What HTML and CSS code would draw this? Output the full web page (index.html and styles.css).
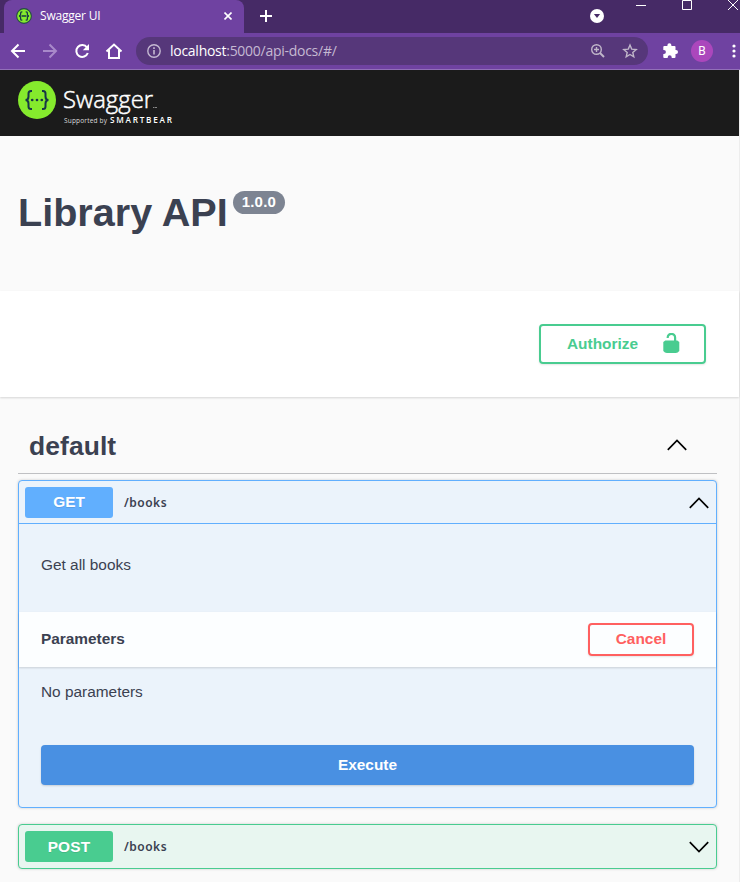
FILE: index.html
```html
<!DOCTYPE html>
<html lang="en">
<head>
<meta charset="utf-8">
<title>Swagger UI</title>
<link rel="stylesheet" href="styles.css">
</head>
<body>
<div class="tabstrip">
  <div class="tab">
    <svg class="favicon" width="16" height="16" viewBox="0 0 38 38"><circle cx="19" cy="19" r="17.5" fill="#85ea2d" stroke="#254b45" stroke-width="2.5"/><g fill="none" stroke="#173647" stroke-width="3"><path d="M15 9h-1q-3 0-3 3v3q0 4-4 4q4 0 4 4v3q0 3 3 3h1M23 9h1q3 0 3 3v3q0 4 4 4q-4 0-4 4v3q0 3-3 3h-1M13 19h12"/></g></svg>
    <span class="tab-title">Swagger UI</span>
    <svg class="tab-close" width="8" height="8" viewBox="0 0 8 8"><path d="M.5.5l7 7M7.500.5l-7 7" stroke="#fff" stroke-width="1.6"/></svg>
  </div>
  <svg class="new-tab" width="12" height="12" viewBox="0 0 12 12"><path d="M6 0v12M0 6h12" stroke="#fff" stroke-width="2"/></svg>
  <svg class="tab-search" width="14" height="14" viewBox="0 0 14 14"><circle cx="7" cy="7" r="7" fill="#fff"/><path d="M3.900 5h6.200L7 9z" fill="#462a66"/></svg>
  <svg class="window-controls" width="105" height="12" viewBox="0 0 105 12" fill="none" stroke="#fff"><path d="M1 5.500h10M47.500.5h9v9h-9zM93 0l10 10M103 0l-10 10"/></svg>
</div>
<div class="toolbar">
  <svg class="nav" width="136" height="36" viewBox="0 0 136 36" fill="none" stroke="#fff" stroke-width="2"><path d="M25 18H12.500M18.500 11.500L12 18l6.500 6.500"/><path d="M43 18h12.500M49.500 11.500L56 18l-6.500 6.500" stroke="#a889ca"/><path d="M87 14.500A5.900 5.900 0 1 0 87.800 20"/><path d="M89 11v6.200h-6.200z" fill="#fff" stroke="none"/><path d="M106.500 18.500L114 11.500l7.500 7M109 17v8h10v-8"/></svg>
  <div class="address">
    <svg width="14" height="14" viewBox="0 0 14 14" fill="none" stroke="#c5b9d2" stroke-width="1.400"><circle cx="7" cy="7" r="6.200"/><path d="M7 6v4.500M7 3.200v1.700" stroke-width="1.600"/></svg>
    <span class="url"><b>localhost</b>:5000/api-docs/#/</span>
    <svg class="address-actions" width="48" height="16" viewBox="0 0 48 16" fill="none" stroke="#c0b6c9" stroke-width="1.400"><circle cx="6.500" cy="6.500" r="4.800"/><path d="M10 10l4 4" stroke-width="2"/><path d="M4 6.500h5M6.500 4v5M40 2l1.700 4.100 4.500.4-3.400 2.900 1 4.400-3.800-2.300-3.800 2.300 1-4.400-3.400-2.900 4.500-.4z"/></svg>
  </div>
  <svg class="extension" width="15" height="15" viewBox="0 0 15 15"><path d="M1.300 3h3.100v-.7a2 2 0 0 1 4 0V3h3.100q1 0 1 1v3h.5a2 2 0 0 1 0 4h-.5v3q0 1-1 1H8.700v-.8a2 2 0 0 0-4 0v.8H1.300q-1 0-1-1v-3h.6a2 2 0 0 0 0-4H.300V4q0-1 1-1z" fill="#fff"/></svg>
  <span class="avatar">B</span>
  <svg class="more" width="4" height="14" viewBox="0 0 4 14" fill="#fff"><circle cx="2" cy="2" r="1.600"/><circle cx="2" cy="7" r="1.600"/><circle cx="2" cy="12" r="1.600"/></svg>
</div>
<div class="page">
  <header class="topbar">
    <svg width="160" height="50" viewBox="0 0 160 50">
      <circle cx="19" cy="19" r="19" fill="#85ea2d"/>
      <g fill="none" stroke="#173647" stroke-width="2"><path d="M14 10h-1q-2.500 0-2.500 2.500v3Q10.500 19 7.500 19q3 0 3 3.500v3q0 2.500 2.500 2.500h1M24 10h1q2.500 0 2.500 2.500v3q0 3.500 3 3.500q-3 0-3 3.500v3q0 2.500-2.500 2.500h-1"/></g>
      <g fill="#173647"><circle cx="14.200" cy="19" r="1.350"/><circle cx="19" cy="19" r="1.350"/><circle cx="23.800" cy="19" r="1.350"/></g>
      <g fill="#fff"><text class="logo-name" x="45" y="27" textLength="90" lengthAdjust="spacingAndGlyphs">Swagger</text><path d="M135 26.500h1.500M137 26.500h2" stroke="#888"/><text class="logo-by" x="46" y="42" textLength="43">Supported by</text><text class="logo-brand" x="92" y="42" textLength="62">SMARTBEAR</text></g>
    </svg>
  </header>
  <section class="info"><h1>Library API</h1><span class="version">1.0.0</span></section>
  <section class="schemes">
    <button class="btn authorize"><span>Authorize</span><svg width="17" height="20" viewBox="0 0 17 20"><path d="M4.700 5V4.500a3.700 3.700 0 0 1 7.400 0V9" fill="none" stroke="#49cc90" stroke-width="2.200"/><path d="M2.300 7.500h12l2 1.500v9q-1.500 2-3.500 2h-9q-2 0-3.500-2V9z" fill="#49cc90"/></svg></button>
  </section>
  <main>
    <div class="tag"><h2>default</h2><svg width="20" height="12" viewBox="0 0 20 12"><path d="M.8 10.800L10 1.500l9.200 9.300"/></svg></div>
    <article class="operation get">
      <div class="summary"><span class="method">GET</span><span class="path">/books</span><svg width="20" height="12" viewBox="0 0 20 12"><path d="M.8 10.800L10 1.500l9.200 9.300"/></svg></div>
      <div class="description">Get all books</div>
      <div class="section-header"><h4>Parameters</h4><button class="btn cancel">Cancel</button></div>
      <div class="parameters">No parameters</div>
      <button class="execute">Execute</button>
    </article>
    <article class="operation post">
      <div class="summary"><span class="method">POST</span><span class="path">/books</span><svg width="20" height="12" viewBox="0 0 20 12"><path d="M.8 1.200L10 10.500l9.200-9.300"/></svg></div>
    </article>
  </main>
</div>
</body>
</html>
```
FILE: styles.css
```css
* { box-sizing: border-box; }
body { margin: 0; height: 882px; overflow: hidden; background: #fafafa; color: #3b4151; font-family: "Liberation Sans", sans-serif; font-size: 15.4px; }
svg { display: block; flex: none; }
h1, h2, h4 { margin: 0; }
button { font: bold 15.4px "Liberation Sans", sans-serif; }
.tabstrip { display: flex; height: 33px; padding-left: 4px; background: #462a66; }
.tab { display: flex; align-items: center; width: 240px; padding: 0 12px; border-radius: 8px 8px 0 0; background: #6f42a1; color: #fff; font: 12px/32px "Open Sans", sans-serif; }
.tab-title { margin: -1px 0 0 8px; letter-spacing: -.2px; }
.tab-close { margin: -1px 0 0 auto; }
.favicon { margin-top: -1px; }
.new-tab { margin: 10px 0 0 16px; }
.tab-search { margin: 9px 0 0 318px; }
.window-controls { margin-left: 31px; }
.toolbar { display: flex; align-items: center; height: 37px; padding-bottom: 1px; border-bottom: 1px solid #9270b8; background: #6f42a1; }
.address { display: flex; align-items: center; width: 512px; height: 28px; padding: 0 10px 0 11px; border-radius: 14px; background: #56377a; margin-top: 1px; }
.url { margin-left: 9px; color: #c5b9d2; font: 14px/28px "Open Sans", sans-serif; letter-spacing: -.27px; }
.url b { color: #fff; font-weight: 400; }
.address-actions { margin-left: auto; }
.extension { margin-left: 15px; }
.avatar { width: 22px; height: 22px; margin-left: 13px; border-radius: 50%; background: #ab47bc; color: #fff; font: 12px/22px Roboto, sans-serif; text-align: center; }
.more { margin-left: 19px; }
.page { height: 812px; border-right: 1px solid #ededed; }
.topbar { height: 66px; padding: 11px 18px; background: #1b1b1b; }
.logo-name { font: 300 24.500px "Open Sans", sans-serif; stroke: #fff; stroke-width: .5px; }
.logo-by { font: 6.500px "Open Sans", sans-serif; fill: #ddd; }
.logo-brand { font: 600 8.200px "Open Sans", sans-serif; }
.info { display: flex; height: 155px; padding: 54px 18px 0; }
h1 { margin-top: -1px; font-size: 39.6px; line-height: 46px; }
.version { height: 23px; margin: 1px 0 0 5px; padding: 0 9px; border-radius: 12px; background: #7d8492; color: #fff; font-size: 15px; font-weight: bold; line-height: 22px; letter-spacing: .2px; }
.schemes { display: flex; justify-content: flex-end; height: 106px; padding: 33px 33px 0; background: #fff; box-shadow: 0 1px 2px rgba(0,0,0,.15); }
.btn { display: flex; align-items: center; border: 2px solid; border-radius: 4px; background: transparent; box-shadow: 0 1px 2px rgba(0,0,0,.1); }
.authorize { justify-content: space-between; width: 167px; height: 40px; padding: 0 24px 0 26px; color: #49cc90; border-color: #49cc90; }
.authorize svg { margin-top: -2px; }
main { padding: 22px 22px 0 18px; }
.tag { display: flex; align-items: center; justify-content: space-between; height: 55px; padding: 0 30px 0 11px; border-bottom: 1px solid #bfc0c3; }
.tag svg { margin-top: -3px; }
h2 { font-size: 26.400px; line-height: 30px; letter-spacing: .1px; }
.tag svg path, .summary svg path { fill: none; stroke: #000; stroke-width: 1.700; }
.operation { border: 1px solid; border-radius: 4px; box-shadow: 0 0 3px rgba(0,0,0,.19); }
.get { height: 328px; margin-top: 6px; border-color: #61affe; background: #ebf3fb; }
.post { height: 45px; margin-top: 16px; border-color: #49cc90; background: #e8f6f0; }
.summary { display: flex; align-items: center; height: 43px; padding: 0 7px 0 6px; }
.get .summary { border-bottom: 1px solid #61affe; }
.method { width: 88px; height: 31px; border-radius: 3px; background: #61affe; color: #fff; font-weight: bold; line-height: 30px; text-align: center; text-shadow: 0 1px 0 rgba(0,0,0,.1); }
.post .method { background: #49cc90; line-height: 31px; letter-spacing: .2px; }
.path { margin-left: 11px; font: 600 12px/20px "Noto Sans", sans-serif; letter-spacing: .5px; }
.get .path { padding-top: 2px; }
.summary svg { margin-left: auto; }
.get .summary svg { margin-top: 2px; }
.description { height: 88px; padding: 32px 22px 0; line-height: 18px; }
.section-header { display: flex; align-items: center; justify-content: space-between; height: 55px; padding: 0 22px; background: rgba(255,255,255,.85); box-shadow: 0 1px 2px rgba(0,0,0,.15); }
h4 { margin-top: -2px; font-size: 15.400px; }
.cancel { justify-content: center; width: 106px; height: 33px; padding-bottom: 2px; color: #ff6060; border-color: #ff6060; }
.parameters { height: 78px; padding: 16px 22px 0; line-height: 18px; }
.execute { display: block; width: 653px; height: 40px; margin: 0 22px; border: 0; border-radius: 4px; background: #4990e2; color: #fff; box-shadow: 0 1px 2px rgba(0,0,0,.15); }
```
